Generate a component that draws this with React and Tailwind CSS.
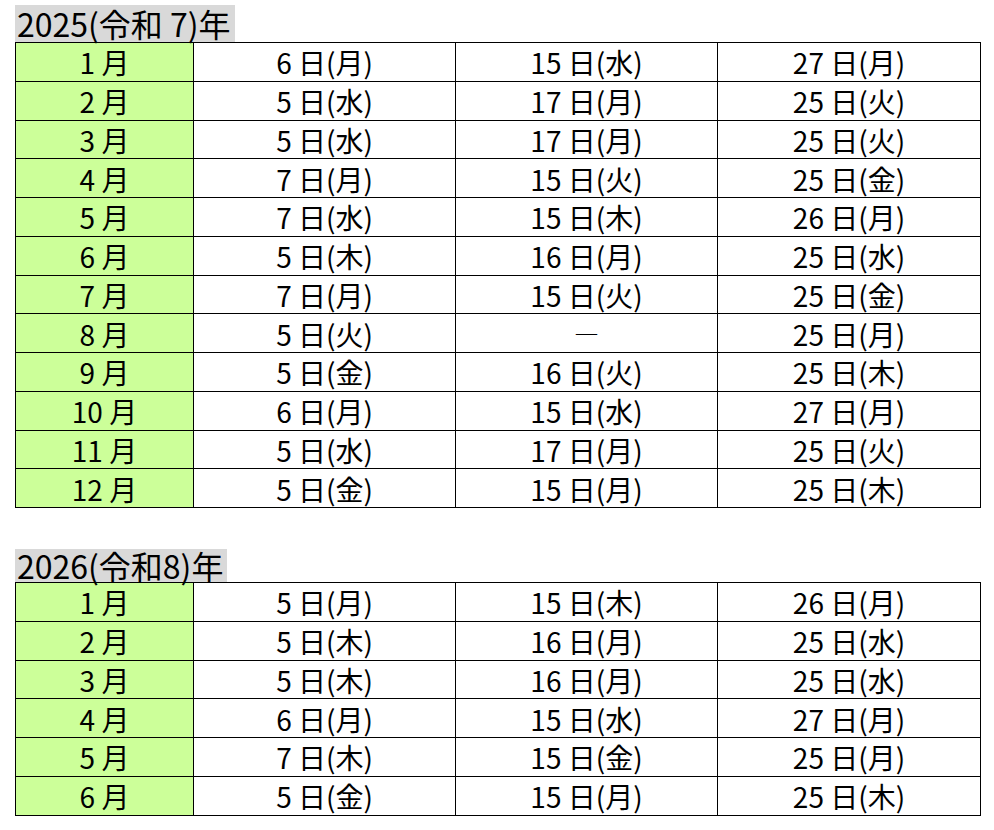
import React from 'react';

const font = { fontFamily: '"Noto Sans CJK JP", "Noto Sans", sans-serif' };

const y2025 = [
  ['1 月', '6 日(月)', '15 日(水)', '27 日(月)'],
  ['2 月', '5 日(水)', '17 日(月)', '25 日(火)'],
  ['3 月', '5 日(水)', '17 日(月)', '25 日(火)'],
  ['4 月', '7 日(月)', '15 日(火)', '25 日(金)'],
  ['5 月', '7 日(水)', '15 日(木)', '26 日(月)'],
  ['6 月', '5 日(木)', '16 日(月)', '25 日(水)'],
  ['7 月', '7 日(月)', '15 日(火)', '25 日(金)'],
  ['8 月', '5 日(火)', '―', '25 日(月)'],
  ['9 月', '5 日(金)', '16 日(火)', '25 日(木)'],
  ['10 月', '6 日(月)', '15 日(水)', '27 日(月)'],
  ['11 月', '5 日(水)', '17 日(月)', '25 日(火)'],
  ['12 月', '5 日(金)', '15 日(月)', '25 日(木)'],
];

const y2026 = [
  ['1 月', '5 日(月)', '15 日(木)', '26 日(月)'],
  ['2 月', '5 日(木)', '16 日(月)', '25 日(水)'],
  ['3 月', '5 日(木)', '16 日(月)', '25 日(水)'],
  ['4 月', '6 日(月)', '15 日(水)', '27 日(月)'],
  ['5 月', '7 日(木)', '15 日(金)', '25 日(月)'],
  ['6 月', '5 日(金)', '15 日(月)', '25 日(木)'],
];

const YearTable = ({ title, rows, rowH, titleH }) => (
  <div>
    <div className={`w-fit bg-[#d9d9d9] text-[32px] text-black pl-[2px] pr-[4px] ${titleH}`}>
      {title}
    </div>
    <table className="border-collapse w-[965px] table-fixed">
      <colgroup>
        <col className="w-[178px]" />
        <col className="w-[262px]" />
        <col className="w-[262px]" />
        <col className="w-[263px]" />
      </colgroup>
      <tbody>
        {rows.map((r, i) => (
          <tr key={i} className={rowH}>
            {r.map((c, j) => (
              <td
                key={j}
                className={`border border-black text-center text-black p-0 pt-px leading-none ${j === 0 ? 'bg-[#ccff99]' : 'bg-white'}`}
              >
                {c === '―' ? (
                  <span className="text-[25px]">―</span>
                ) : (
                  <span className="text-[28px]">{c}</span>
                )}
              </td>
            ))}
          </tr>
        ))}
      </tbody>
    </table>
  </div>
);

export default function App() {
  return (
    <div className="bg-white w-[994px] h-[830px] pl-[15px] pt-[5px]" style={font}>
      <YearTable title="2025(令和 7)年" rows={y2025} rowH="h-[38.75px]" titleH="h-[37px] leading-[37px]" />
      <div className="h-[41px]" />
      <YearTable title="2026(令和8)年" rows={y2026} rowH="h-[38.75px]" titleH="h-[33px] leading-[33px]" />
    </div>
  );
}
